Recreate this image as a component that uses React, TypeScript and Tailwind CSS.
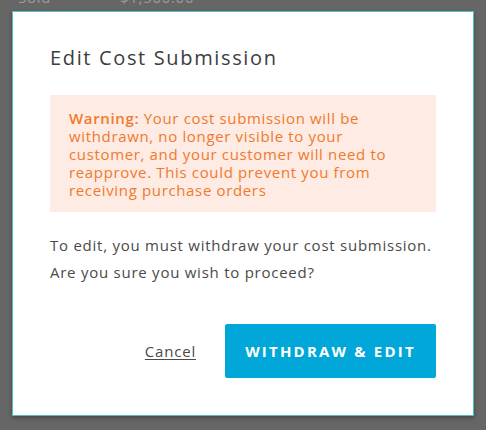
export default function App() {
  return (
    <div className="w-[486px] h-[430px] bg-[#666666] overflow-hidden relative" style={{ fontFamily: '"Open Sans", "Noto Sans", sans-serif' }}>
      <div className="h-[11px] overflow-hidden text-[15px] text-[#9a9a9a] leading-[15px] tracking-[0.7px]">
        <div className="flex -mt-[10px]">
          <span className="ml-[18px] w-[102px]">Sold</span>
          <span>$1,500.00</span>
        </div>
      </div>
      <div className="ml-[12px] w-[462px] h-[405px] bg-white border border-[#4fbfc4] shadow-[0_2px_4px_rgba(0,0,0,0.3)] px-[37px] pt-[33px]">
        <h1 className="text-[20px] text-[#3d3d3d] leading-[26px] tracking-[1.65px]">Edit Cost Submission</h1>
        <div className="mt-[24px] bg-[#fdebe4] px-[19px] pt-[14px] pb-[13px] text-[15px] leading-[18px] text-[#f07a2b] tracking-[0.65px]">
          <span className="font-semibold">Warning:</span> Your cost submission will be withdrawn, no longer visible to your customer, and your customer will need to reapprove. This could prevent you from receiving purchase orders
        </div>
        <p className="mt-[23px] text-[15px] leading-[20px] text-[#4a4a4a] tracking-[0.75px]">To edit, you must withdraw your cost submission.</p>
        <p className="mt-[7px] text-[15px] leading-[20px] text-[#4a4a4a] tracking-[0.75px]">Are you sure you wish to proceed?</p>
        <div className="mt-[42px] flex items-center justify-end">
          <button className="text-[15px] text-[#4a4a4a] underline underline-offset-2 mr-[29px] tracking-[0.8px]">Cancel</button>
          <button className="w-[211px] h-[54px] rounded-[2px] bg-[#00a7d8] text-white text-[15px] font-bold tracking-[2.2px]">WITHDRAW &amp; EDIT</button>
        </div>
      </div>
    </div>
  );
}
